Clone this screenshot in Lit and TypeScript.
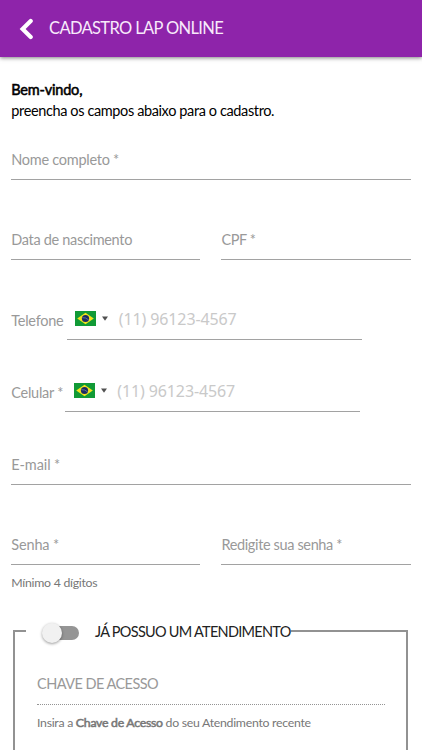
import { LitElement, html, css, svg } from "lit";
import { customElement, property } from "lit/decorators.js";

const flag = svg`
  <rect width="21" height="15" fill="#119a36"/>
  <path d="M10.5 1.7 18.8 7.5 10.5 13.3 2.2 7.5Z" fill="#f2e31c"/>
  <circle cx="10.5" cy="7.5" r="3.6" fill="#1c2b62"/>
  <path d="M7.3 6.7Q10.8 6.2 13.6 8.9" stroke="#8fa3b4" stroke-width=".6" fill="none"/>`;

@customElement("form-field")
class FormField extends LitElement {
  @property() label = "";
  @property({ type: Number }) spacing = -0.27;
  static styles = css`
    :host { display: block; flex: 1; height: 30px; border-bottom: 1px solid #a2a2a2; color: #999; }
    .label { display: block; line-height: 21px; white-space: nowrap; }
  `;
  render() {
    return html`<span class="label" style="letter-spacing:${this.spacing}px">${this.label}</span>`;
  }
}

@customElement("phone-field")
class PhoneField extends LitElement {
  @property() label = "";
  @property({ type: Number }) labelWidth = 55.5;
  @property({ type: Number }) spacing = -0.27;
  static styles = css`
    :host { display: flex; height: 31px; color: #999; }
    .label { line-height: 23px; white-space: nowrap; flex: none; }
    .input { display: flex; width: 295px; height: 31px; border-bottom: 1px solid #a2a2a2; box-sizing: border-box; padding-left: 8.5px; }
    .flag { width: 21px; height: 15px; margin-top: 2px; }
    .caret { width: 6px; height: 5px; margin: 7px 0 0 6px; }
    .number { margin-left: 10.5px; font: 16px/21px "Noto Sans", sans-serif; letter-spacing: -.12px; color: #c9c9c9; white-space: nowrap; }
  `;
  render() {
    return html`
      <span class="label" style="width:${this.labelWidth}px;letter-spacing:${this.spacing}px">${this.label}</span>
      <div class="input">
        <svg class="flag" viewBox="0 0 21 15">${flag}</svg>
        <svg class="caret" viewBox="0 0 6 5"><path d="M0 .5H6L3 4.7Z" fill="#505050"/></svg>
        <span class="number">(11) 96123-4567</span>
      </div>`;
  }
}

@customElement("app-root")
class AppRoot extends LitElement {
  static styles = css`
    :host { display: block; height: 750px; overflow: hidden; background: #fff; color: #000; font: 14.5px/21px Lato, sans-serif; }
    header { display: flex; align-items: center; height: 57px; background: #8e24aa; color: #f8eafb; box-shadow: 0 1px 4px rgba(0,0,0,.5); }
    .back { width: 14px; height: 22px; margin-left: 19px; }
    h1 { font-size: 16.5px; font-weight: 400; margin: 0 0 0 16px; letter-spacing: -.64px; white-space: nowrap; }
    main { padding: 0 11.5px 0 11.3px; }
    b { font-weight: 400; -webkit-text-stroke: .55px currentColor; }
    .intro { margin: 22px 0 0; white-space: nowrap; letter-spacing: -.38px; }
    .intro b { display: block; letter-spacing: -.2px; }
    .row { display: flex; gap: 21px; }
    .name { margin-top: 28px; }
    .birth { margin-top: 49px; }
    .phone { margin-top: 49px; }
    .mobile { margin-top: 41px; }
    .email { margin-top: 42px; }
    .pass { margin-top: 49px; }
    .hint { font-size: 12.3px; line-height: 18px; color: #777; margin-top: 9px; letter-spacing: -.28px; }
    .access { height: 160px; margin: 38px 2.5px 0 1.7px; border: 2px solid #929292; box-sizing: border-box; padding: 0 21px 0 22px; }
    .legend { display: flex; align-items: center; width: 265px; height: 22px; margin: -12px 0 0 -11px; background: #fff; color: #222; white-space: nowrap; letter-spacing: -.72px; }
    .switch { position: relative; width: 33px; height: 14px; border-radius: 7px; background: #959595; margin: 3px 16px 0 20px; flex: none; }
    .thumb { position: absolute; left: -4px; top: -3px; width: 20px; height: 20px; border-radius: 50%; background: #f1f1f1; box-shadow: 0 1px 3px rgba(0,0,0,.4); }
    .key { color: #999; line-height: 22px; height: 31px; margin-top: 31px; border-bottom: 1px dotted #949494; letter-spacing: -.54px; }
    .help { font-size: 12.3px; line-height: 18px; color: #777; margin-top: 9px; white-space: nowrap; letter-spacing: -.28px; }
  `;
  render() {
    return html`
      <header>
        <svg class="back" viewBox="0 0 14 22"><path d="M11.7 2.9 3.6 11 11.7 19.1" fill="none" stroke="#fff" stroke-width="4.2" stroke-linecap="round" stroke-linejoin="miter"/></svg>
        <h1>CADASTRO LAP ONLINE</h1>
      </header>
      <main>
        <p class="intro"><b>Bem-vindo,</b>preencha os campos abaixo para o cadastro.</p>
        <div class="row name"><form-field label="Nome completo *"></form-field></div>
        <div class="row birth"><form-field label="Data de nascimento" .spacing=${-0.32}></form-field><form-field label="CPF *" .spacing=${-0.4}></form-field></div>
        <phone-field class="phone" label="Telefone"></phone-field>
        <phone-field class="mobile" label="Celular *" .labelWidth=${54}></phone-field>
        <div class="row email"><form-field label="E-mail *" .spacing=${-0.1}></form-field></div>
        <div class="row pass"><form-field label="Senha *" .spacing=${-0.15}></form-field><form-field label="Redigite sua senha *" .spacing=${-0.36}></form-field></div>
        <div class="hint">Mínimo 4 dígitos</div>
        <section class="access">
          <div class="legend"><span class="switch"><span class="thumb"></span></span><span>JÁ POSSUO UM ATENDIMENTO</span></div>
          <div class="key">CHAVE DE ACESSO</div>
          <div class="help">Insira a <b>Chave de Acesso</b> do seu Atendimento recente</div>
        </section>
      </main>`;
  }
}
